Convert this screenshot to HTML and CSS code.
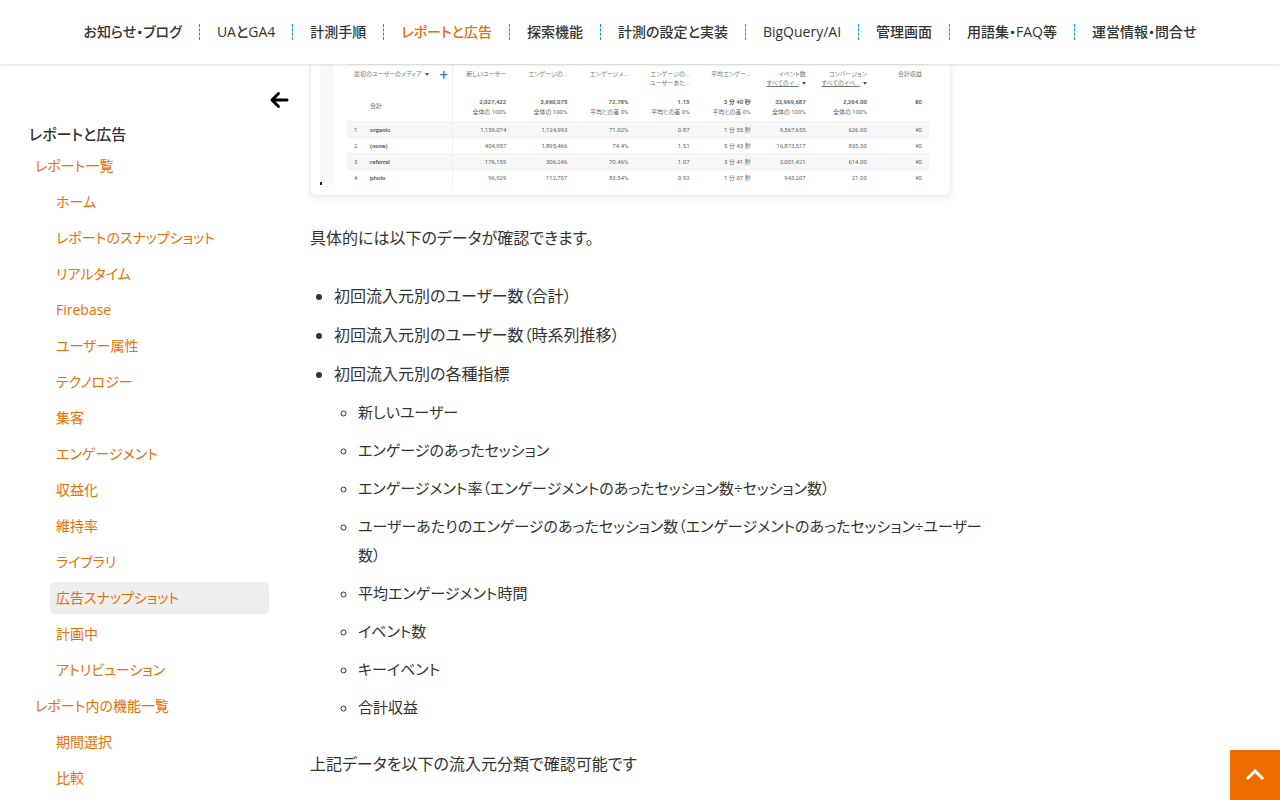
FILE: index.html
```html
<!DOCTYPE html>
<html lang="ja">
<head>
  <meta charset="UTF-8">
  <meta name="viewport" content="width=device-width, initial-scale=1">
  <title>広告スナップショット</title>
  <link rel="stylesheet" href="styles.css">
</head>
<body>

  <header class="header">
    <nav class="gnav">
      <a href="#">お知らせ・ブログ</a>
      <a href="#">UAとGA4</a>
      <a href="#">計測手順</a>
      <a href="#" class="current">レポートと広告</a>
      <a href="#">探索機能</a>
      <a href="#">計測の設定と実装</a>
      <a href="#">BigQuery/AI</a>
      <a href="#">管理画面</a>
      <a href="#">用語集・FAQ等</a>
      <a href="#">運営情報・問合せ</a>
    </nav>
  </header>

  <div class="container">

    <!-- サイドバー -->
    <aside class="sidebar">
      <button type="button" class="toggle" aria-label="メニューを閉じる">
        <svg width="20" height="20" viewBox="0 0 20 20"><path d="M18 10H3M9.500 3.500L3 10l6.500 6.500" fill="none" stroke="#000" stroke-width="3" stroke-linecap="round" stroke-linejoin="round"/></svg>
      </button>
      <h2 class="side-title">レポートと広告</h2>
      <ul class="side-menu">
        <li><a href="#">レポート一覧</a>
          <ul>
            <li><a href="#">ホーム</a></li>
            <li><a href="#">レポートのスナップショット</a></li>
            <li><a href="#">リアルタイム</a></li>
            <li><a href="#">Firebase</a></li>
            <li><a href="#">ユーザー属性</a></li>
            <li><a href="#">テクノロジー</a></li>
            <li><a href="#">集客</a></li>
            <li><a href="#">エンゲージメント</a></li>
            <li><a href="#">収益化</a></li>
            <li><a href="#">維持率</a></li>
            <li><a href="#">ライブラリ</a></li>
            <li><a href="#" class="active">広告スナップショット</a></li>
            <li><a href="#">計画中</a></li>
            <li><a href="#">アトリビューション</a></li>
          </ul>
        </li>
        <li><a href="#">レポート内の機能一覧</a>
          <ul>
            <li><a href="#">期間選択</a></li>
            <li><a href="#">比較</a></li>
          </ul>
        </li>
      </ul>
    </aside>

    <!-- 本文 -->
    <main class="content">
      <div class="shot">
        <div class="shot-rail"><span></span></div>
        <table class="report">
          <colgroup>
            <col class="c-no"><col class="c-name"><col class="c-num"><col class="c-num"><col class="c-num"><col class="c-num"><col class="c-num"><col class="c-event"><col class="c-num"><col class="c-event">
          </colgroup>
          <thead>
            <tr>
              <th colspan="2" class="dim">最初のユーザーのメディア<i class="caret"></i><b class="plus">+</b></th>
              <th>新しいユーザー</th>
              <th>エンゲージの...</th>
              <th>エンゲージメ...</th>
              <th>エンゲージの...<br>ユーザーあた...</th>
              <th>平均エンゲー...</th>
              <th>イベント数<br><u>すべてのイ...</u><i class="caret"></i></th>
              <th>コンバージョン<br><u>すべてのイベ...</u><i class="caret"></i></th>
              <th>合計収益</th>
            </tr>
          </thead>
          <tbody>
            <tr class="total">
              <td></td>
              <td class="sum">合計</td>
              <td><b>2,027,422</b><br>全体の 100%</td>
              <td><b>3,690,075</b><br>全体の 100%</td>
              <td><b>72.78%</b><br>平均との差 0%</td>
              <td><b>1.15</b><br>平均との差 0%</td>
              <td><b>3 分 40 秒</b><br>平均との差 0%</td>
              <td><b>32,969,687</b><br>全体の 100%</td>
              <td><b>2,264.00</b><br>全体の 100%</td>
              <td><b>¥0</b></td>
            </tr>
            <tr><td>1</td><td>organic</td><td>1,159,074</td><td>1,124,993</td><td>71.02%</td><td>0.87</td><td>1 分 55 秒</td><td>9,567,655</td><td>626.00</td><td>¥0</td></tr>
            <tr><td>2</td><td>(none)</td><td>404,957</td><td>1,895,466</td><td>74.4%</td><td>1.51</td><td>5 分 43 秒</td><td>16,873,517</td><td>835.00</td><td>¥0</td></tr>
            <tr><td>3</td><td>referral</td><td>176,159</td><td>306,246</td><td>70.46%</td><td>1.07</td><td>3 分 41 秒</td><td>3,001,421</td><td>614.00</td><td>¥0</td></tr>
            <tr><td>4</td><td>photo</td><td>96,929</td><td>112,707</td><td>83.54%</td><td>0.92</td><td>1 分 07 秒</td><td>943,207</td><td>21.00</td><td>¥0</td></tr>
          </tbody>
        </table>
      </div>

      <p>具体的には以下のデータが確認できます。</p>

      <ul class="list">
        <li>初回流入元別のユーザー数（合計）</li>
        <li>初回流入元別のユーザー数（時系列推移）</li>
        <li>初回流入元別の各種指標
          <ul>
            <li>新しいユーザー</li>
            <li>エンゲージのあったセッション</li>
            <li>エンゲージメント率（エンゲージメントのあったセッション数÷セッション数）</li>
            <li>ユーザーあたりのエンゲージのあったセッション数（エンゲージメントのあったセッション÷ユーザー<br>数）</li>
            <li>平均エンゲージメント時間</li>
            <li>イベント数</li>
            <li>キーイベント</li>
            <li>合計収益</li>
          </ul>
        </li>
      </ul>

      <p>上記データを以下の流入元分類で確認可能です</p>
    </main>

  </div>

  <a href="#" class="pagetop" aria-label="ページの先頭へ">
    <svg width="20" height="12" viewBox="0 0 20 12"><path d="M2 10l8-8 8 8" fill="none" stroke="#fff" stroke-width="3"/></svg>
  </a>

</body>
</html>
```
FILE: styles.css
```css
* {
  box-sizing: border-box;
}

body {
  margin: 0;
  font-family: "Open Sans", "Noto Sans CJK JP", sans-serif;
  font-size: 16px;
  line-height: 29px;
  color: #333;
  background: #fff;
  font-feature-settings: "palt";
}

a {
  color: #ed6d00;
  text-decoration: none;
}

ul {
  margin: 0;
  padding: 0;
}

/* header */
.header {
  position: sticky;
  top: 0;
  z-index: 10;
  height: 64px;
  background: #fff;
  box-shadow: 0 1px 3px rgba(0,0,0,0.12);
}

.gnav {
  display: flex;
  justify-content: center;
  align-items: center;
  height: 64px;
}

.gnav a {
  padding: 0 17px;
  font-size: 14px;
  font-weight: 500;
  line-height: 16px;
  white-space: nowrap;
  color: #333;
  border-right: 1px dashed #00a0e9;
}

.gnav a:last-child {
  border-right: none;
}

.gnav a.current {
  color: #ed6d00;
}

/* layout */
.container {
  display: flex;
  align-items: flex-start;
  gap: 20px;
}

.sidebar {
  flex: 0 0 290px;
  padding-top: 26px;
}

.content {
  flex: 0 1 641px;
  min-width: 0;
}

/* sidebar */
.toggle {
  display: block;
  margin-left: auto;
  padding: 0;
  width: 21px;
  height: 20px;
  border: none;
  background: none;
  cursor: pointer;
}

.toggle svg {
  display: block;
}

.side-title {
  margin: 8px 0 0 29px;
  font-size: 15px;
  font-weight: 500;
  line-height: 32px;
}

.side-menu {
  margin: 0 21px 0 29px;
  font-size: 14px;
  list-style: none;
}

.side-menu ul {
  margin-left: 21px;
  list-style: none;
}

.side-menu a {
  display: block;
  margin-bottom: 4px;
  padding: 0 6px;
  line-height: 32px;
  border-radius: 5px;
}

.side-menu a.active {
  background: #eee;
}

/* report card */
.shot {
  display: flex;
  align-items: flex-start;
  height: 132px;
  padding: 0 9px 10px;
  border: 1px solid #eee;
  border-top: none;
  border-radius: 0 0 6px 6px;
  box-shadow: 0 2px 6px rgba(0,0,0,0.08);
  overflow: hidden;
}

.shot-rail {
  display: flex;
  align-items: flex-end;
  align-self: stretch;
  flex: 0 0 13px;
  margin-right: 14px;
  background: #f8f9fb;
}

.shot-rail span {
  width: 2px;
  height: 3px;
  background: #222;
}

.report {
  width: 582px;
  table-layout: fixed;
  border-collapse: collapse;
  font-family: Roboto, "Noto Sans CJK JP", sans-serif;
  font-size: 6px;
  line-height: 10px;
  color: #666;
}

.c-no { width: 23px; }
.c-name { width: 82px; }
.c-num { width: 61px; }
.c-event { width: 55px; }

.report th,
.report td {
  padding: 0 7px 0 0;
  text-align: right;
  white-space: nowrap;
}

.report th {
  height: 27px;
  padding-top: 4px;
  font-weight: 400;
  line-height: 9px;
  vertical-align: top;
  color: #777;
}

.report thead tr {
  border-top: 1px solid #eee;
}

.report th.dim {
  padding-left: 7px;
  padding-right: 4px;
  text-align: left;
  border-right: 1px solid #eee;
}

.report td:nth-child(2) {
  font-weight: 700;
  text-align: left;
  border-right: 1px solid #eee;
}

.report td:first-child {
  padding-left: 7px;
  text-align: left;
}

.report td {
  height: 16px;
  border-bottom: 1px solid #f2f2f2;
}

.report tr:last-child td {
  border-bottom: none;
}

.report .total td {
  height: 30px;
  padding-top: 5px;
  vertical-align: top;
}

.report .total td.sum {
  padding-top: 9px;
  font-weight: 400;
}

.report tbody tr:nth-child(even) {
  background: #f6f6f6;
}

.caret {
  display: inline-block;
  margin-left: 3px;
  border: 2px solid transparent;
  border-top: 3px solid #555;
  border-bottom: none;
  vertical-align: middle;
}

.plus {
  float: right;
  font-size: 14px;
  font-weight: 400;
  line-height: 12px;
  color: #1a73e8;
}

/* text */
.content p {
  margin: 28px 0 29px;
}

.list {
  padding-left: 24px;
}

.list > li {
  margin-bottom: 10px;
}

.list ul {
  margin-top: 9px;
  padding-left: 24px;
  font-size: 15px;
  white-space: nowrap;
}

.list ul li {
  margin-bottom: 9px;
}

/* page top */
.pagetop {
  position: fixed;
  right: 0;
  bottom: 0;
  display: flex;
  justify-content: center;
  align-items: center;
  width: 50px;
  height: 50px;
  background: #ed6d00;
}
```
